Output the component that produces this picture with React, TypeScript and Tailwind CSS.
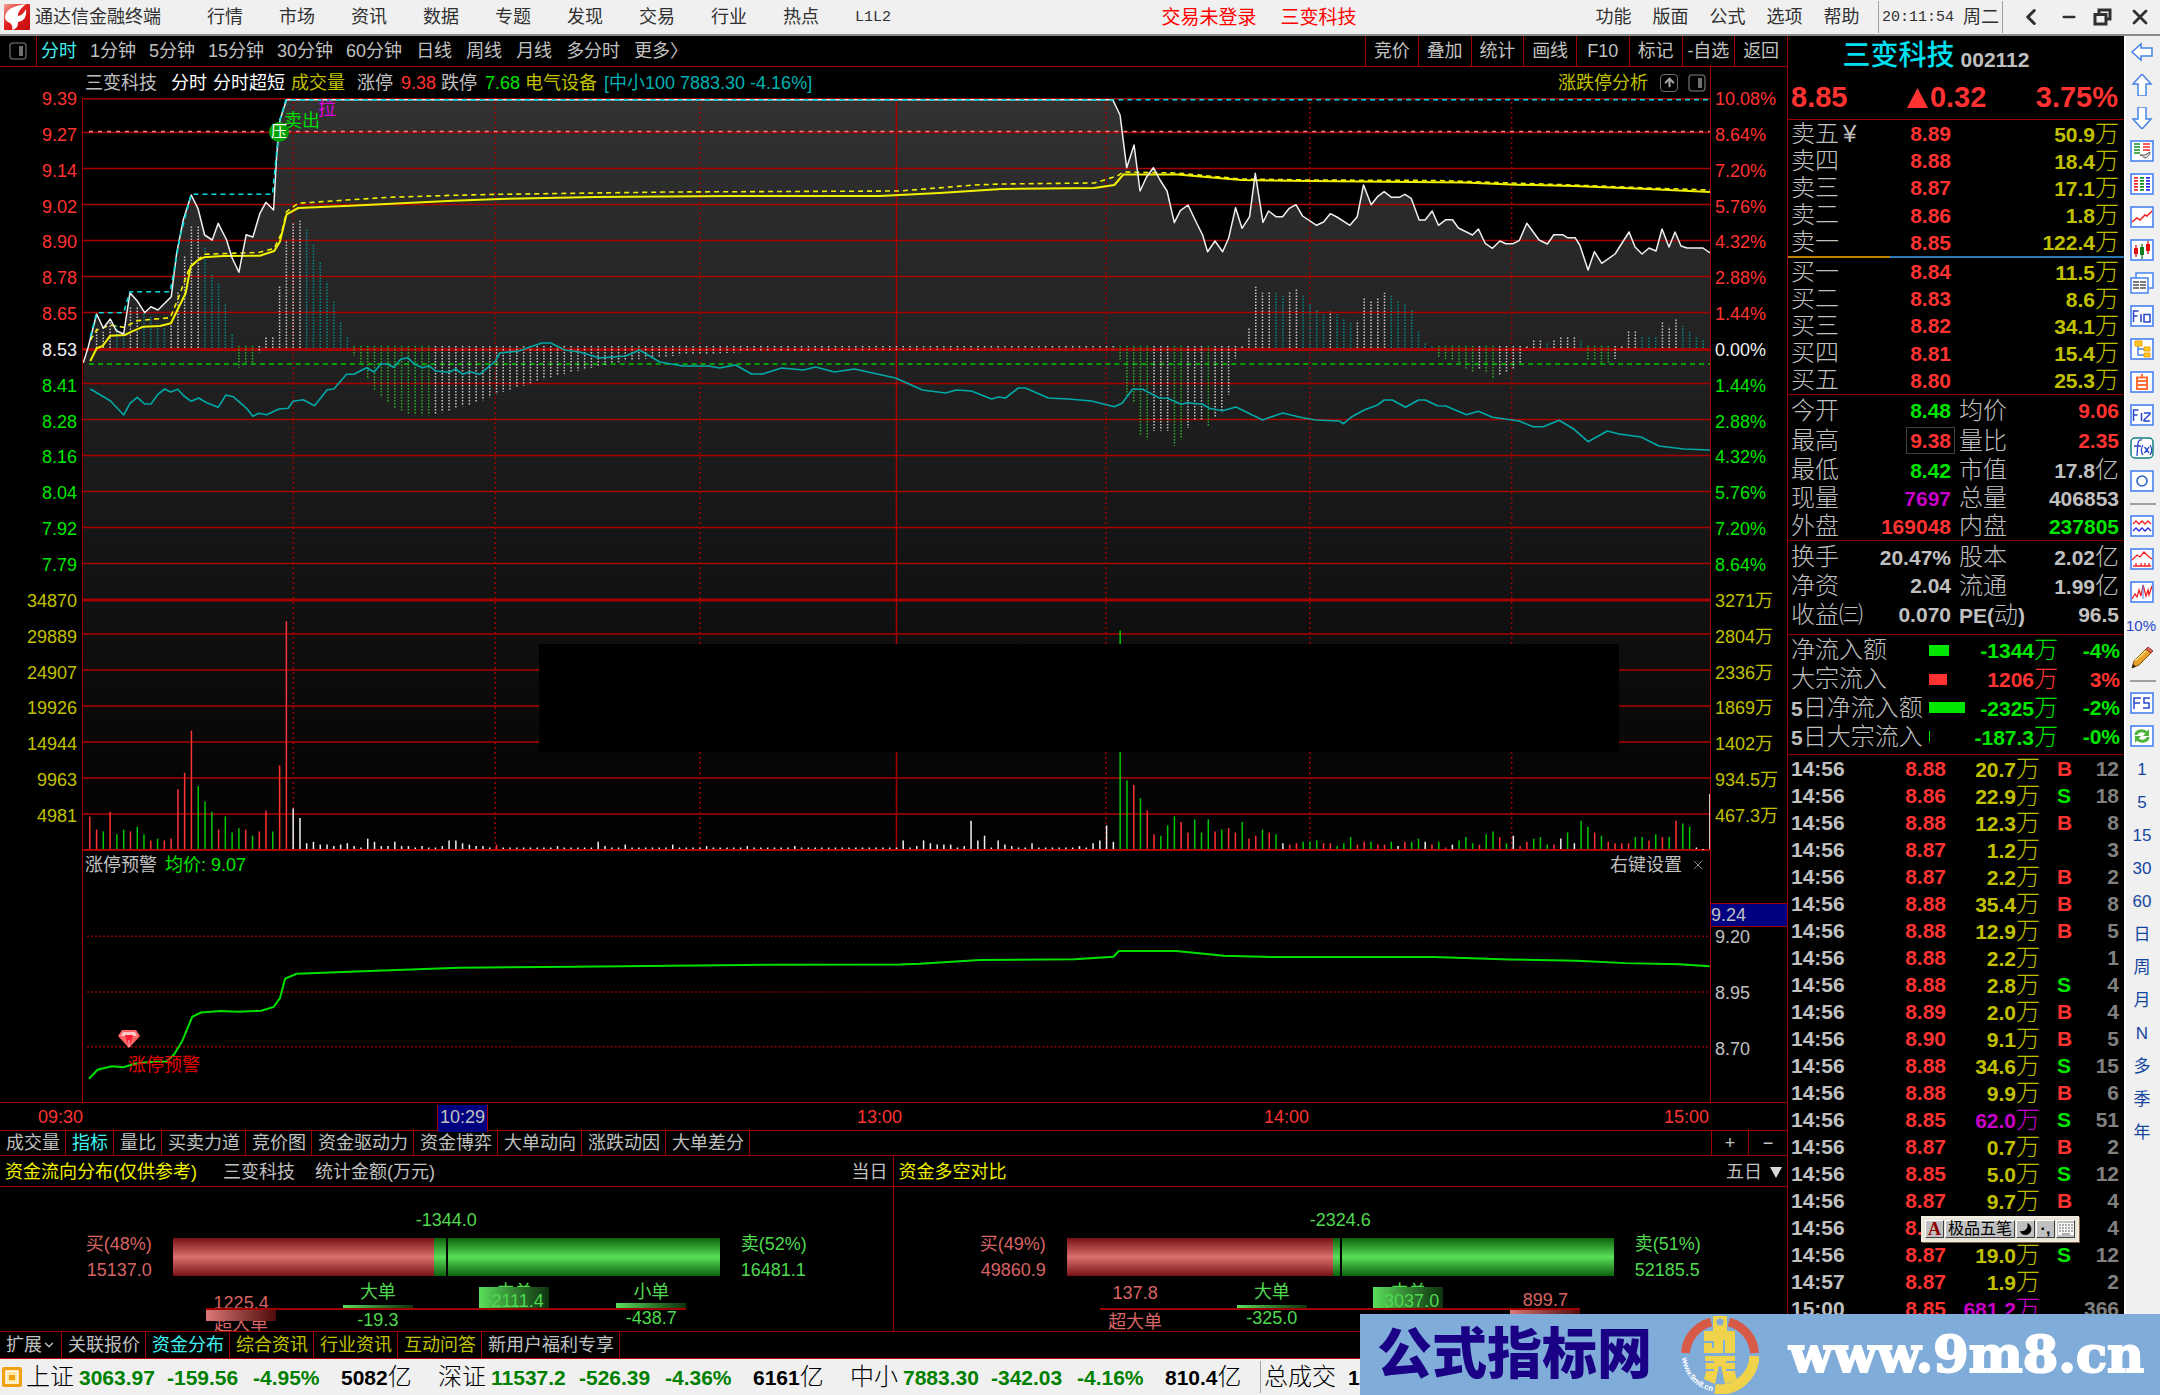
import React from "react";
import { ArrowUp, ChevronDown, ChevronLeft, Minus, X } from "lucide-react";

type Pt = [number, number];

/* ---------- chart geometry ---------- */
const STEP = 6.783;
const LEFT = 83;
const minuteX = (i: number) => LEFT + STEP * i;
const at = (ox: number, oy: number, kx: number, ky: number, list: Pt[]): Pt[] =>
  list.map(([x, y]) => [ox + x / kx, oy + y / ky]);
const path = (list: Pt[]) => list.map(([x, y]) => `${x.toFixed(1)},${y.toFixed(1)}`).join(" ");

const price: Pt[] = [
  ...at(80, 90, 3, 3, [
    [10, 818], [25, 770], [50, 672], [70, 715], [91, 687], [109, 722], [131, 732], [150, 608], [172, 633], [194, 668],
    [213, 650], [234, 660], [274, 620], [290, 490], [310, 390], [334, 315], [354, 355], [374, 435], [397, 450], [415, 400],
    [440, 450], [455, 500], [477, 547], [499, 434], [519, 441], [540, 370], [558, 337], [581, 360], [590, 200], [600, 90], [620, 29],
  ]),
  ...at(1110, 90, 3, 3, [
    [10, 29], [32, 75], [52, 233], [74, 165], [92, 303], [112, 260], [132, 233], [152, 270], [173, 303], [195, 398],
    [213, 362], [236, 345], [260, 395], [280, 435], [295, 485], [317, 453], [340, 485], [358, 445], [379, 353], [398, 415],
    [421, 380], [438, 250], [461, 397], [478, 363], [500, 380], [520, 380], [540, 355], [560, 344], [580, 378], [622, 406],
    [643, 396], [663, 371], [683, 381], [722, 406], [744, 380], [763, 285], [786, 344], [805, 320], [825, 305], [847, 322],
    [870, 322], [887, 313], [906, 325], [930, 390], [948, 390], [969, 363], [988, 406], [1010, 389], [1030, 389], [1048, 414],
    [1090, 435], [1108, 417], [1128, 460], [1150, 475], [1172, 453], [1190, 461], [1212, 461], [1231, 451], [1253, 400],
    [1290, 450], [1315, 462], [1334, 434], [1360, 434], [1375, 443], [1398, 443], [1412, 465], [1437, 540], [1456, 485], [1478, 520],
  ]),
  [1616, 254], [1630, 232], [1636, 247], [1643, 254], [1650, 248], [1657, 251], [1663, 229], [1670, 247], [1676, 232],
  [1682, 246], [1688, 248], [1704, 248], [1711, 253],
];

const high: Pt[] = [
  ...at(80, 90, 3, 3, [
    [31, 740], [50, 668], [131, 668], [150, 605], [271, 605], [300, 440], [334, 313], [578, 313], [585, 240], [600, 90], [618, 29],
  ]),
  [1711, 99.7],
];

const average: Pt[] = [
  ...at(80, 90, 3, 3, [
    [31, 813], [50, 775], [68, 768], [91, 737], [135, 735], [155, 725], [190, 710], [240, 708], [273, 700], [295, 655],
    [317, 610], [332, 530], [352, 512], [372, 502], [430, 498], [540, 497], [583, 483], [600, 455], [620, 373], [655, 354],
    [810, 347], [1120, 332], [1260, 327],
  ]),
  [596, 197], [731, 196], [880, 196], [940, 193], [1002, 189], [1095, 188], [1115, 185], [1124, 174.5], [1178, 174.5],
  [1242, 180], [1310, 181], [1465, 182.5], [1511, 184.5], [1574, 186], [1649, 189], [1711, 192],
];

const averageFast: Pt[] = [
  ...at(80, 90, 3, 3, [
    [31, 750], [50, 720], [91, 705], [131, 712], [172, 692], [271, 683], [295, 625], [330, 530], [374, 493], [540, 487],
    [583, 475], [605, 430], [620, 365], [655, 340], [800, 330], [930, 322], [1120, 316], [1260, 313],
  ]),
  [596, 193], [670, 192], [900, 191], [975, 185], [1002, 184], [1095, 183], [1118, 176], [1124, 172], [1178, 173],
  [1242, 179], [1310, 180], [1440, 180.5], [1511, 183], [1574, 185], [1649, 188], [1711, 190],
];

const indexLine: Pt[] = [
  ...at(80, 90, 3, 3, [
    [31, 897], [91, 932], [131, 975], [150, 940], [172, 922], [194, 942], [213, 942], [234, 913], [254, 897], [272, 906],
    [293, 898], [312, 918], [334, 934], [356, 924], [380, 938], [415, 952], [438, 915], [460, 920], [500, 955], [519, 979],
    [536, 970], [560, 974], [597, 957], [625, 955], [640, 934], [670, 929], [704, 947], [742, 899], [762, 897], [800, 853],
    [822, 853], [860, 833], [883, 846], [903, 822], [922, 822], [942, 832], [963, 808], [983, 803], [1005, 823], [1028, 833],
    [1048, 827], [1067, 843], [1108, 847], [1128, 837], [1149, 853], [1170, 845], [1200, 853], [1225, 832], [1247, 813],
  ]),
  [500, 353], [519, 351], [542, 343], [551, 343], [565, 350], [580, 352], [600, 358], [626, 356], [640, 350], [660, 362],
  [683, 366], [709, 366], [720, 368], [736, 365], [752, 374], [763, 374], [782, 368], [804, 370], [816, 367], [835, 372],
  [855, 369], [896, 378], [923, 390], [946, 393], [957, 390], [972, 391], [992, 399], [999, 397], [1006, 398], [1019, 388],
  [1026, 388], [1049, 398], [1069, 399], [1092, 401],
  ...at(1110, 90, 3, 3, [
    [15, 950], [38, 940], [70, 898], [100, 898], [150, 924], [175, 925], [215, 943], [235, 938], [280, 943], [300, 955],
    [340, 962], [380, 951], [460, 990], [520, 969], [580, 983], [620, 990], [690, 993], [703, 1001], [725, 982], [765, 960],
    [805, 945], [825, 930], [850, 930], [889, 952], [928, 930], [948, 930], [985, 947], [1010, 948], [1072, 974], [1108, 964],
    [1150, 982], [1230, 993], [1272, 1010], [1303, 1010], [1350, 991], [1395, 1018], [1437, 1055], [1495, 1023],
  ]),
  [1620, 434], [1642, 437], [1660, 446], [1685, 449], [1711, 450],
];

const warning: Pt[] = [
  ...at(0, 560, 1.742, 2.8, [
    [155, 1452], [170, 1427], [195, 1417], [215, 1420], [235, 1410], [260, 1405], [290, 1404], [303, 1385], [318, 1345],
    [335, 1278], [350, 1266], [385, 1262], [415, 1264], [455, 1261], [477, 1250], [488, 1225], [497, 1170], [517, 1157],
    [632, 1150], [800, 1140], [1000, 1137], [1296, 1132], [1568, 1131],
  ]),
  ...at(880, 560, 1.742, 2.8, [
    [70, 1129], [175, 1118], [340, 1116], [408, 1109], [417, 1093], [517, 1093], [600, 1106], [690, 1110], [967, 1110],
    [1098, 1117], [1215, 1120], [1300, 1127], [1394, 1130], [1447, 1136],
  ]),
];

const INK: Record<string, string> = { W: "#c8c8c8", T: "#008a8a", G: "#2fae2f", R: "#ff3232", g: "#00c800", w: "#f0f0f0" };

type Bar = { i: number; ink: string; level: number };
const parse = (start: number, text: string): Bar[] =>
  text.split(" ").map((t, k) => ({ i: start + k, ink: t[0], level: Number(t.slice(1)) }));

const momentum: Bar[] = [
  ...parse(2, "W715 W725 W695 T705 T735 W650 W650 T670 T680 T700 T710 W695 W603 W495 W405 W405 T472 T548 T580 T643 T733 G833 G820 G825 W787 W742 W742 W585 W453 W400 W392 T418 T463 T517 T575 T635 T693 T742 G797 G822 G868 G900 G922 G940 G955 G964 G972 G976 G976 G976 W972 W967 W962 W957 W949 W945 W937 W931 W922 W913"),
  ...parse(62, "W905 W899 W893 W887 W880 W874 W868 W862 W857 W852 W847 W842 W838 W834 W830 W825 W821 W817 W814 W811 W808 W806 W804 W802 W800 W798 W796 W795 W794 W793 W792 W791 W790 W789 W788 W787 W786 W786 W785 W785 W784 W784 W783 W783 W783 W782 W782 W782 W782 W781 W781 W781 W781 W781 W780 W780 W780 W780 W780 W780 W780 W780 W779 W779 W779 W779 W779 W779 W779 W779 W779"),
  ...parse(133, "W778 W778 W778 W778 W778 W778 W778 W778 W778 W778 W778 W778 W778 W778 W778 W778 W778 W778 W778 W778"),
  ...parse(153, "G812 G920 G940 G1035 G1048 W1022 W1022 W1022 G1067 G1048 W1013 W990 W990 G1010 W983 W967 W914 W806 W765 W712 W590 W608 W603 T608 T617 W603 W595 T617 T640 T660 T673 W665 T672 T685 T698 W692 W625 W630 W622 W608 T617 T630 T640 T660 T720 T760 T767 G802 G808 G812 G825 G838 G847 W838 G850 G868 W856 W847 W838 W823 W765 W747 W750 T760 W747 W740 W738 W740 T752 G812 G812 G820 G822 W807 W765 W720 W720 T738 T738 T742 W697 W710 W688 T708 T725 T740 T748"),
];

const small = (n: number, level = 805) => Array(n).fill(`w${level}`).join(" ");
const volume: Bar[] = parse(
  1,
  "R718 R755 g760 R705 g768 g755 R760 g747 g768 R785 g780 R785 R780 R642 R596 R478 g633 g676 g705 R755 g718 g763 g751 R755 g772 R760 R701 g760 R575 R171 w696 w722 w793 w789 w797 w797 w801 w797 w793 w801 w805 w780 w789 w801 w801 w789 w801 w801 w805 w801 w805 w805 w801 w785 w785 w793 w797 w801 w801 w805 R797 " +
    small(8) + " w801 " + small(5) + " w789 w801 w805 w805 w797 " + small(6) + " w797 " + small(4) + " w801 " + small(5) + " w801 " + small(6) + " w801 " + small(15) +
    " w785 w805 w801 w785 w793 w797 w797 w797 w805 w801 w730 w785 w772 w805 w785 w797 w801 w805 w805 w793 " + small(6) +
    " w801 w805 w793 w785 w743 w789 g197 g617 R630 g667 R701 R768 g772 g743 g718 R734 R763 g726 g763 g726 R760 g755 R751 R763 g734 R780 R772 g755 R763 g768 w793 R797 R793 g789 g789 g785 R793 R793 g801 g793 g776 R797 R789 g789 R797 R797 g789 w801 R789 g789 g780 w789 R797 g789 R805 w797 g785 g776 g793 R797 g768 g760 R776 g793 w772 R801 R789 g780 g776 g797 R797 w780 g763 w793 g730 g747 R763 g772 R789 R793 R793 R793 g776 g776 R785 g768 R776 g776 R730 g738 g747 w805 w812 w655",
);

const priceGrid = [132.5, 168.5, 204.5, 240.5, 276.5, 312.5, 383.5, 419.5, 455.5, 491.5, 527.5, 563.5];
const volumeGrid = [634, 670, 706, 742, 778, 814];
const dottedX = [293.5, 495.5, 700.5, 1106.5, 1310.5, 1512.5];

function PriceChart() {
  return (
    <svg className="block h-full w-full" viewBox="83 98 1628 753" preserveAspectRatio="none" aria-label="三变科技分时图">
      <defs>
        <linearGradient id="shade" x1="0" y1="98" x2="0" y2="850" gradientUnits="userSpaceOnUse">
          <stop offset="0" stopColor="#323232" />
          <stop offset="0.5" stopColor="#1a1a1a" />
          <stop offset="1" stopColor="#000" />
        </linearGradient>
      </defs>
      <polygon points={`83,850 ${path(price)} 1711,850`} fill="url(#shade)" />
      <g stroke="#a80000" strokeWidth="1.5">
        <path d="M83 98.7H1711" />
        {priceGrid.map((y) => <path key={y} d={`M83 ${y}H1711`} />)}
        <path d="M83 349.5H1711M83 600H1711" strokeWidth="3" />
        <path d="M897 98V850" />
      </g>
      <g stroke="#850000" strokeWidth="2">
        {volumeGrid.map((y) => <path key={y} d={`M83 ${y}H1711`} />)}
        <path d="M83 850H1711" stroke="#b00000" />
      </g>
      <g stroke="#a00000" strokeWidth="1.5" strokeDasharray="2 3">
        {dottedX.map((x) => <path key={x} d={`M${x} 102V850`} />)}
      </g>
      <path d="M89 131.5H1711" stroke="#ff8080" strokeWidth="1.5" strokeDasharray="4 5" />
      <path d="M89 364H1711" stroke="#00c800" strokeWidth="1.5" strokeDasharray="5 4" />
      <g strokeWidth="1.5" strokeDasharray="1.5 1.5">
        {momentum.map(({ i, ink, level }) => (
          <path key={i} d={`M${minuteX(i).toFixed(1)} ${level < 777 ? 348 : 346}V${(90 + level / 3).toFixed(1)}`} stroke={INK[ink]} />
        ))}
      </g>
      <g strokeWidth="1.5">
        {volume.map(({ i, ink, level }) => (
          <path key={i} d={`M${minuteX(i).toFixed(1)} 849V${(560 + level / 2.8).toFixed(1)}`} stroke={INK[ink]} />
        ))}
      </g>
      <g fill="none" strokeLinejoin="round">
        <polyline points={path(indexLine)} stroke="#00a8a8" strokeWidth="1.6" />
        <polyline points={path(average)} stroke="#f0f000" strokeWidth="2" />
        <polyline points={path(averageFast)} stroke="#f0f000" strokeWidth="1.6" strokeDasharray="5 4" />
        <polyline points={path(price)} stroke="#f0f0f0" strokeWidth="1.5" />
        <polyline points={path(high)} stroke="#00dcdc" strokeWidth="1.6" strokeDasharray="5 4" />
      </g>
    </svg>
  );
}

function WarningChart() {
  return (
    <svg className="block h-full w-full" viewBox="83 878 1628 224" preserveAspectRatio="none" aria-label="涨停预警">
      <g stroke="#900000" strokeWidth="1.3" strokeDasharray="2 2">
        <path d="M87 935.5H1711M87 991.5H1711M87 1046.5H1711" />
      </g>
      <polyline points={path(warning)} fill="none" stroke="#00e000" strokeWidth="2" />
    </svg>
  );
}

/* ---------- page data ---------- */
const menus = ["行情", "市场", "资讯", "数据", "专题", "发现", "交易", "行业", "热点"];
const rightMenus = ["功能", "版面", "公式", "选项", "帮助"];
const minutePeriods = ["1分钟", "5分钟", "15分钟", "30分钟", "60分钟"];
const longPeriods = ["日线", "周线", "月线", "多分时", "更多〉"];
const tools = ["竞价", "叠加", "统计", "画线", "F10", "标记", "-自选", "返回"];
const indicatorTabs = ["成交量", "指标", "量比", "买卖力道", "竞价图", "资金驱动力", "资金博弈", "大单动向", "涨跌动因", "大单差分"];
const leftAxis = ["9.39", "9.27", "9.14", "9.02", "8.90", "8.78", "8.65", "8.53", "8.41", "8.28", "8.16", "8.04", "7.92", "7.79", "34870", "29889", "24907", "19926", "14944", "9963", "4981"];
const rightAxis = ["10.08%", "8.64%", "7.20%", "5.76%", "4.32%", "2.88%", "1.44%", "0.00%", "1.44%", "2.88%", "4.32%", "5.76%", "7.20%", "8.64%", "3271万", "2804万", "2336万", "1869万", "1402万", "934.5万", "467.3万"];
const axisInk = (i: number) =>
  i < 7 ? "text-[#ff3232]" : i === 7 ? "text-[#f0f0f0]" : i < 14 ? "text-[#00e600]" : "text-[#c0c000]";

const asks = [["卖五", "8.89", "50.9"], ["卖四", "8.88", "18.4"], ["卖三", "8.87", "17.1"], ["卖二", "8.86", "1.8"], ["卖一", "8.85", "122.4"]];
const bids = [["买一", "8.84", "11.5"], ["买二", "8.83", "8.6"], ["买三", "8.82", "34.1"], ["买四", "8.81", "15.4"], ["买五", "8.80", "25.3"]];

const red = "text-[#ff3232]";
const green = "text-[#00e600]";
const gray = "text-[#c0c0c0]";
const purple = "text-[#c800c8]";
const olive = "text-[#c0c000]";

const stats = [
  ["今开", "8.48", green, "均价", "9.06", red],
  ["最高", "9.38", red, "量比", "2.35", red],
  ["最低", "8.42", green, "市值", "17.8亿", gray],
  ["现量", "7697", purple, "总量", "406853", gray],
  ["外盘", "169048", red, "内盘", "237805", green],
];
const shares = [
  ["换手", "20.47%", gray, "股本", "2.02亿", gray],
  ["净资", "2.04", gray, "流通", "1.99亿", gray],
  ["收益㈢", "0.070", gray, "PE(动)", "96.5", gray],
];
const flows = [
  { name: "净流入额", bar: "w-5 bg-[#00e600]", value: "-1344万", pct: "-4%", ink: green },
  { name: "大宗流入", bar: "w-[18px] bg-[#ff3232]", value: "1206万", pct: "3%", ink: red },
  { name: "5日净流入额", bar: "w-9 bg-[#00e600]", value: "-2325万", pct: "-2%", ink: green },
  { name: "5日大宗流入", bar: "w-px bg-[#00e600]", value: "-187.3万", pct: "-0%", ink: green },
];
const ticks = [
  "14:56 8.88 20.7 B 12", "14:56 8.86 22.9 S 18", "14:56 8.88 12.3 B 8", "14:56 8.87 1.2 - 3", "14:56 8.87 2.2 B 2",
  "14:56 8.88 35.4 B 8", "14:56 8.88 12.9 B 5", "14:56 8.88 2.2 - 1", "14:56 8.88 2.8 S 4", "14:56 8.89 2.0 B 4",
  "14:56 8.90 9.1 B 5", "14:56 8.88 34.6 S 15", "14:56 8.88 9.9 B 6", "14:56 8.85 62.0 S 51", "14:56 8.87 0.7 B 2",
  "14:56 8.85 5.0 S 12", "14:56 8.87 9.7 B 4", "14:56 8. - - 4", "14:56 8.87 19.0 S 12", "14:57 8.87 1.9 - 2",
  "15:00 8.85 681.2 - 366",
].map((t) => t.split(" "));

/* Figures are heavy, Chinese characters light and larger. */
function Mixed({ text }: { text: string }) {
  return (
    <>
      {text.split(/([\u3200-\u9fff]+)/).filter(Boolean).map((part, i) =>
        /[\u3200-\u9fff]/.test(part) ? (
          <span key={i} className="text-2xl leading-none font-light">{part}</span>
        ) : (
          <span key={i} className="text-[21px] leading-none font-bold">{part}</span>
        ),
      )}
    </>
  );
}

/* ---------- header ---------- */
function Header() {
  return (
    <header className="flex h-9 items-center border-b-2 border-[#8a8a8a] bg-[#f0f0f0] text-lg leading-none text-[#303030]">
      <svg className="ml-1 h-[26px] w-[26px]" viewBox="0 0 26 26">
        <defs>
          <linearGradient id="brand" x1="0" y1="0" x2="1" y2="1">
            <stop offset="0" stopColor="#f4a090" />
            <stop offset="0.45" stopColor="#e02020" />
            <stop offset="1" stopColor="#c80808" />
          </linearGradient>
        </defs>
        <rect width="26" height="26" rx="1" fill="url(#brand)" />
        <path d="M1 13C2 5 9 2 22 0c-6 5-8 8-8 12 3 0 6-3 8-7 1 8-2 12-8 13 0 5-2 7-6 8 1-3 0-5-2-7-3-1-5-3-5-6Z" fill="#fff" />
      </svg>
      <h1 className="ml-[5px] w-[126px] whitespace-nowrap">通达信金融终端</h1>
      <nav className="ml-7 flex">
        {menus.map((m) => (
          <button key={m} className="w-[72px] text-center">{m}</button>
        ))}
        <button className="w-[72px] text-center font-['Liberation_Mono',monospace] text-[15px]">L1L2</button>
      </nav>
      <div className="flex flex-1 justify-center gap-6 pl-6 text-[19px] whitespace-nowrap text-[#ff0000]">
        <button>交易未登录</button>
        <button>三变科技</button>
      </div>
      <nav className="flex">
        {rightMenus.map((m) => (
          <button key={m} className="w-[57px] text-center">{m}</button>
        ))}
      </nav>
      <div className="ml-2 flex h-8 w-[125px] items-center justify-between border-x border-[#a0a0a0] px-[3px]">
        <time className="font-['Liberation_Mono',monospace] text-[15px]">20:11:54</time>
        <span>周二</span>
      </div>
      <div className="flex w-[157px] items-center justify-between pr-2 pl-[15px]">
        <button aria-label="后退"><ChevronLeft size={26} strokeWidth={2.8} /></button>
        <button aria-label="最小化"><Minus size={18} strokeWidth={3.4} /></button>
        <button aria-label="还原">
          <svg className="h-[18px] w-[19px]" viewBox="0 0 19 18">
            <path d="M6 6V2h11v9h-4M2 6.500h11V16H2Z" fill="none" stroke="#303030" strokeWidth="3" />
          </svg>
        </button>
        <button aria-label="关闭"><X size={24} strokeWidth={2.8} /></button>
      </div>
    </header>
  );
}

function PanelIcon() {
  return (
    <svg className="h-[18px] w-[18px]" viewBox="0 0 18 18">
      <rect x="1" y="1" width="16" height="16" rx="3" fill="none" stroke="#585858" strokeWidth="1.6" />
      <rect x="10" y="4" width="4" height="10" fill="#707070" />
    </svg>
  );
}

function Toolbar() {
  return (
    <div className="flex h-[31px] items-center border-b border-[#a00000] text-lg leading-none text-[#c0c0c0]">
      <button aria-label="侧栏" className="flex h-full w-[37px] items-center justify-center border-r border-[#a00000]">
        <PanelIcon />
      </button>
      <nav className="ml-1 flex gap-[13px] whitespace-nowrap">
        <button className="text-[#40f0f0]">分时</button>
        {minutePeriods.map((p) => <button key={p}>{p}</button>)}
        {longPeriods.map((p) => <button key={p} className="pl-px">{p}</button>)}
      </nav>
      <nav className="ml-auto grid h-full w-[422px] grid-cols-8">
        {tools.map((t) => (
          <button key={t} className="border-l border-[#a00000] text-center whitespace-nowrap">{t}</button>
        ))}
      </nav>
    </div>
  );
}

function ChartCaption() {
  return (
    <div className="mr-[76px] flex h-[31px] items-center border-r border-[#a00000] pr-1 pl-[85px] text-lg leading-none whitespace-nowrap text-[#c0c0c0]">
      <span className="w-[86px]">三变科技</span>
      <span className="w-[42px] text-white">分时</span>
      <span className="w-[78px] text-white">分时超短</span>
      <span className="w-[66px] text-[#c0c000]">成交量</span>
      <span className="w-11">涨停</span>
      <span className="w-10 text-[#ff3232]">9.38</span>
      <span className="w-11">跌停</span>
      <span className="w-10 text-[#00e600]">7.68</span>
      <span className="w-[79px] text-[#c0c000]">电气设备</span>
      <span className="text-[#00b0b0]">[中小100 7883.30 -4.16%]</span>
      <button className="ml-auto text-[#c0c000]">涨跌停分析</button>
      <button aria-label="上移" className="mr-2.5 ml-3 flex h-[18px] w-[18px] items-center justify-center rounded border border-[#707070] text-[#a0a0a0]">
        <ArrowUp size={13} strokeWidth={4} />
      </button>
      <button aria-label="侧栏"><PanelIcon /></button>
    </div>
  );
}

function Charts() {
  return (
    <section className="text-lg whitespace-nowrap">
      <ChartCaption />
      <div className="flex h-[753px]">
        <ul className="-mt-[9px] flex h-[737px] w-[82px] flex-col justify-between pr-[5px] text-right">
          {leftAxis.map((v, i) => <li key={i} className={`h-5 leading-5 ${axisInk(i)}`}>{v}</li>)}
        </ul>
        <div className="relative min-w-0 flex-1 border-x border-[#a00000]">
          <PriceChart />
          <div className="absolute top-[546px] left-[28%] h-[108px] w-[66.4%] bg-black" />
          <span className="absolute top-0.5 left-[235px] leading-none text-[#e000e0]">拉</span>
          <span className="absolute top-3.5 left-[201px] leading-none text-[#00dc00]">卖出</span>
          <span className="absolute top-6 left-[186px] flex h-5 w-5 items-center justify-center rounded-full bg-[#00a000] text-base leading-none text-white">
            压
          </span>
        </div>
        <ul className="-mt-[9px] flex h-[737px] w-[76px] flex-col justify-between pl-1">
          {rightAxis.map((v, i) => <li key={i} className={`h-5 leading-5 ${axisInk(i)}`}>{v}</li>)}
        </ul>
      </div>
      <div className="flex h-[252px] border-b border-[#a00000]">
        <div className="ml-[82px] flex min-w-0 flex-1 flex-col border-x border-[#a00000]">
          <div className="flex h-7 items-center pr-1 pl-0.5 leading-none text-[#c0c0c0]">
            <span>涨停预警</span>
            <span className="ml-2 text-[#00e600]">均价: 9.07</span>
            <button className="ml-auto">右键设置</button>
            <button aria-label="关闭指标" className="ml-2 text-[#909090]"><X size={16} strokeWidth={1.4} /></button>
          </div>
          <div className="relative min-h-0 flex-1">
            <WarningChart />
            <svg className="absolute top-[150px] left-[34px] h-[19px] w-6" viewBox="0 0 24 19">
              <path d="M5 1h14l4 6-11 12L1 7Z" fill="#ff6464" />
              <path d="M6 3h12l2 4H4Z" fill="#ffc8c8" />
              <path d="M8 6h8l-1 4-3 8-3-8Z" fill="#ff1e32" />
              <path d="M12 11v7" stroke="#fff" strokeWidth="0.8" />
            </svg>
            <span className="absolute top-[177px] left-[45px] leading-none text-[#e60000]">涨停预警</span>
          </div>
        </div>
        <div className="w-[76px] pt-[52px] text-[#c0c0c0]">
          <p className="h-6 border-y border-[#a00000] bg-[#000080] leading-[22px]">9.24</p>
          <p className="mb-9 pl-1 leading-5">9.20</p>
          <p className="mb-9 pl-1 leading-5">8.95</p>
          <p className="pl-1 leading-5">8.70</p>
        </div>
      </div>
      <div className="flex h-7 border-b border-[#a00000] pr-[76px] leading-7 text-[#ff3232]">
        <span className="w-[83px] text-right">09:30</span>
        <div className="grid flex-1 grid-cols-[407fr_412fr_407fr_402fr] text-right">
          <span><span className="mr-0.5 inline-block h-[27px] border-x border-[#a00000] bg-[#000080] px-0.5 leading-6 text-[#c0c0c0]">10:29</span></span>
          <span>13:00</span>
          <span>14:00</span>
          <span className="pr-0.5">15:00</span>
        </div>
      </div>
    </section>
  );
}

function TabButton({ label, ink, open }: { label: string; ink: string; open?: boolean }) {
  return (
    <button className={`flex items-center border-r border-[#a00000] pr-[5px] pl-1.5 whitespace-nowrap ${ink}`}>
      {label}
      {open && <ChevronDown size={14} strokeWidth={2.4} />}
    </button>
  );
}

function IndicatorTabs() {
  return (
    <nav className="flex h-[25px] border-b border-[#a00000] text-lg leading-none text-[#c0c0c0]">
      {indicatorTabs.map((t, i) => <TabButton key={t} label={t} ink={i === 1 ? "text-[#40f0f0]" : ""} />)}
      <button aria-label="放大" className="ml-auto w-[38px] border-x border-[#a00000]">+</button>
      <button aria-label="缩小" className="w-[38px]">−</button>
    </nav>
  );
}

/* ---------- money flow ---------- */
type Order = { box: string; name: string; namePos: string; value: string; valuePos: string; ink: string };
const buyInk = "text-[#d86464]";
const sellInk = "text-[#50d850]";

function FlowPanel(props: {
  head: React.ReactNode; net: string; buy: string; buyAmt: string; sell: string; sellAmt: string;
  redWidth: string; orders: Order[]; edge: string;
}) {
  return (
    <section className={`min-w-0 text-lg leading-none whitespace-nowrap ${props.edge}`}>
      <header className="flex h-[31px] items-center border-b border-[#a00000] px-[5px] pt-0.5 text-[#c0c0c0]">{props.head}</header>
      <div className="h-[145px] overflow-hidden border-b border-[#a00000] pt-6">
        <p className={`text-center ${sellInk}`}>{props.net}</p>
        <div className="mt-1.5 flex h-[44px] items-center justify-center gap-[21px]">
          <p className={`w-[70px] text-right leading-[26px] ${buyInk}`}>{props.buy}<br />{props.buyAmt}</p>
          <div className="flex h-[38px] w-[547px]">
            <div className={`bg-linear-to-b from-[#780f14] via-[#dc6e6e] to-[#780f14] ${props.redWidth}`} />
            <div className="relative flex-1 bg-linear-to-b from-[#0a640a] via-[#5ae05a] to-[#0a640a]" />
            <div className="h-full w-0.5 bg-black" />
            <div className="w-[272px] bg-linear-to-b from-[#0a640a] via-[#5ae05a] to-[#0a640a]" />
          </div>
          <p className={`w-[70px] leading-[26px] ${sellInk}`}>{props.sell}<br />{props.sellAmt}</p>
        </div>
        <div className="relative mx-auto grid h-[60px] w-[547px] grid-cols-4 text-center">
          <div className="absolute top-[29px] right-[34px] left-[33px] z-10 h-0.5 bg-[#a00000]" />
          {props.orders.map((o) => (
            <div key={o.name} className={`relative ${o.ink}`}>
              <span className={`absolute inset-x-0 ${o.namePos}`}>{o.name}</span>
              <i className={`absolute left-[33px] w-[70px] bg-linear-to-r ${o.box}`} />
              <span className={`absolute inset-x-0 ${o.valuePos}`}>{o.value}</span>
            </div>
          ))}
        </div>
      </div>
    </section>
  );
}

const greenBox = "from-[#5ae05a] to-[#0f320f]";
const redBox = "from-[#dc7878] to-[#500a0a]";
const dayOrders: Order[] = [
  { name: "超大单", namePos: "top-9", value: "1225.4", valuePos: "top-[15px]", box: `top-[30px] h-3 ${redBox}`, ink: buyInk },
  { name: "大单", namePos: "top-1", value: "-19.3", valuePos: "top-8", box: `top-[26px] h-[3px] ${greenBox}`, ink: sellInk },
  { name: "中单", namePos: "top-1", value: "-2111.4", valuePos: "top-[13px]", box: `top-2 h-[21px] ${greenBox}`, ink: sellInk },
  { name: "小单", namePos: "top-1", value: "-438.7", valuePos: "top-[30px]", box: `top-6 h-[5px] ${greenBox}`, ink: sellInk },
];
const weekOrders: Order[] = [
  { name: "超大单", namePos: "top-[34px]", value: "137.8", valuePos: "top-[5px]", box: `top-[29px] h-px ${redBox}`, ink: buyInk },
  { name: "大单", namePos: "top-1", value: "-325.0", valuePos: "top-[30px]", box: `top-[26px] h-[3px] ${greenBox}`, ink: sellInk },
  { name: "中单", namePos: "top-1", value: "-3037.0", valuePos: "top-[13px]", box: `top-2 h-[21px] ${greenBox}`, ink: sellInk },
  { name: "小单", namePos: "top-9", value: "899.7", valuePos: "top-[12px]", box: `top-[30px] h-3 ${redBox}`, ink: buyInk },
];

function MoneyFlow() {
  return (
    <div className="grid grid-cols-2">
      <FlowPanel
        edge="border-r border-[#a00000]"
        head={<>
          <h2 className="w-[218px] text-[#f0f000]">资金流向分布(仅供参考)</h2>
          <span className="w-[92px]">三变科技</span>
          <span>统计金额(万元)</span>
          <button className="ml-auto">当日</button>
        </>}
        net="-1344.0" buy="买(48%)" buyAmt="15137.0" sell="卖(52%)" sellAmt="16481.1" redWidth="w-[261px]" orders={dayOrders}
      />
      <FlowPanel
        edge=""
        head={<>
          <h2 className="text-[#f0f000]">资金多空对比</h2>
          <button className="ml-auto flex items-center gap-2">五日
            <svg className="h-3 w-3" viewBox="0 0 12 12"><path d="M0 1h12L6 12Z" fill="#d8d8d8" /></svg>
          </button>
        </>}
        net="-2324.6" buy="买(49%)" buyAmt="49860.9" sell="卖(51%)" sellAmt="52185.5" redWidth="w-[266px]" orders={weekOrders}
      />
    </div>
  );
}

function InfoTabs() {
  const plain = "text-[#c0c0c0]";
  const gold = "text-[#c0c000]";
  return (
    <nav className="flex h-[27px] border-b border-[#c00000] text-lg leading-none">
      <TabButton label="扩展" ink={plain} open />
      <TabButton label="关联报价" ink={plain} />
      <TabButton label="资金分布" ink="text-[#40f0f0]" />
      <TabButton label="综合资讯" ink={gold} />
      <TabButton label="行业资讯" ink={gold} />
      <TabButton label="互动问答" ink={gold} />
      <TabButton label="新用户福利专享" ink={plain} />
    </nav>
  );
}

/* ---------- quote panel ---------- */
function Depth({ rows, yen }: { rows: string[][]; yen?: boolean }) {
  return (
    <table className="h-[136px] w-full table-fixed border-collapse leading-none">
      <tbody>
        {rows.map(([name, p, v], i) => (
          <tr key={name}>
            <th scope="row" className="w-[88px] p-0 pl-[3px] text-left text-2xl leading-none font-light text-[#c0c0c0]">
              {name}{yen && i === 0 && <span className="ml-1">¥</span>}
            </th>
            <td className={`w-[75px] p-0 text-right ${red}`}><Mixed text={p} /></td>
            <td className={`p-0 pr-[5px] text-right ${olive}`}><Mixed text={`${v}万`} /></td>
          </tr>
        ))}
      </tbody>
    </table>
  );
}

function StatTable({ rows, size }: { rows: string[][]; size: string }) {
  return (
    <table className={`w-full table-fixed border-collapse leading-none whitespace-nowrap ${size}`}>
      <tbody>
        {rows.map(([a, av, ai, b, bv, bi]) => (
          <tr key={a}>
            <th scope="row" className="w-[74px] p-0 pl-[3px] text-left font-light text-[#c0c0c0]"><Mixed text={a} /></th>
            <td className={`w-[93px] p-0 text-right ${ai}`}>
              <span className={a === "最高" ? "inline-block border border-[#404040] px-[3px] py-0.5" : "pr-1"}><Mixed text={av} /></span>
            </td>
            <th scope="row" className="w-[70px] p-0 pl-1 text-left font-light text-[#c0c0c0]"><Mixed text={b} /></th>
            <td className={`p-0 pr-[5px] text-right ${bi}`}><Mixed text={bv} /></td>
          </tr>
        ))}
      </tbody>
    </table>
  );
}

function Ime() {
  const key = "flex items-center justify-center border border-t-white border-l-white border-r-[#404040] border-b-[#404040] bg-[#c0c0c0]";
  return (
    <div className="absolute top-[1180px] left-[133px] flex h-[26px] w-[158px] gap-px border-2 border-[#f0ece0] bg-[#e8e4d8] p-0.5 text-black shadow-[1px_1px_0_#806040]">
      <button className={`${key} w-[19px] font-['Liberation_Serif',serif] text-lg leading-none font-bold text-[#900000]`}>A</button>
      <button className={`${key} flex-1 text-base leading-none whitespace-nowrap`}>极品五笔</button>
      <button aria-label="半角" className={`${key} w-[19px]`}>
        <svg className="h-3 w-3" viewBox="0 0 12 12"><path d="M7 0c6 2 6 11-1 12-3 0-5-1-6-4 5 1 9-3 7-8Z" /></svg>
      </button>
      <button className={`${key} w-[19px] text-base leading-none font-bold`}>·,</button>
      <button aria-label="软键盘" className={`${key} w-[19px]`}>
        <svg className="h-3 w-4 shrink-0" viewBox="0 0 16 12">
          <rect width="16" height="12" fill="#f8f8f8" />
          <path d="M1 2h14M1 5h14M1 8h14" stroke="#606060" strokeDasharray="2 1" />
          <path d="M4 11h8" stroke="#606060" />
        </svg>
      </button>
    </div>
  );
}

function Quote() {
  return (
    <aside className="relative w-[337px] shrink-0 border-l border-[#a00000]">
      <div className="flex h-10 items-center justify-center gap-1.5 pr-10">
        <h2 className="text-[28px] leading-none font-medium text-[#00e0f0]">三变科技</h2>
        <span className="pt-1.5 text-[21px] leading-none font-bold text-[#c0c0c0]">002112</span>
      </div>
      <div className={`flex h-11 items-center justify-between border-b border-[#a00000] pr-1.5 pl-[3px] text-[29px] leading-none font-bold ${red}`}>
        <span>8.85</span>
        <span className="flex items-center gap-0.5 pl-2.5">
          <svg className="h-5 w-[21px]" viewBox="0 0 21 20"><path d="M10.500 0L21 20H0Z" fill="#ff3232" /></svg>
          0.32
        </span>
        <span>3.75%</span>
      </div>
      <Depth rows={asks} yen />
      <div className="flex h-0.5"><div className="w-[102px] bg-[#c08000]" /><div className="flex-1 bg-[#2878b4]" /></div>
      <Depth rows={bids} />
      <div className="border-y border-[#900000] pt-0.5"><StatTable rows={stats} size="h-[143px]" /></div>
      <div className="border-b border-[#900000] pt-0.5 pb-[5px]"><StatTable rows={shares} size="h-[86px]" /></div>
      <div className="border-b border-[#900000] pt-px pb-[3px]">
        <table className="h-[115px] w-full table-fixed border-collapse leading-none whitespace-nowrap">
          <tbody>
            {flows.map((f) => (
              <tr key={f.name}>
                <th scope="row" className="w-[141px] p-0 pl-[3px] text-left text-[#c0c0c0]"><Mixed text={f.name} /></th>
                <td className="w-[37px] p-0"><div className={`h-[11px] ${f.bar}`} /></td>
                <td className={`w-[92px] p-0 text-right ${f.ink}`}><Mixed text={f.value} /></td>
                <td className={`p-0 pr-1 text-right ${f.ink}`}><Mixed text={f.pct} /></td>
              </tr>
            ))}
          </tbody>
        </table>
      </div>
      <table className="w-full table-fixed border-collapse leading-none whitespace-nowrap">
        <tbody>
          {ticks.map(([t, p, v, side, n], i) => (
            <tr key={i} className="h-[27px]">
              <td className="w-[80px] p-0 pl-[3px] text-[#c0c0c0]"><Mixed text={t} /></td>
              <td className={v === "-" ? `w-[78px] p-0 pl-[37px] ${red}` : `w-[78px] p-0 text-right ${red}`}><Mixed text={p} /></td>
              <td className={`w-[94px] p-0 text-right ${Number(v) > 50 ? purple : olive}`}>{v !== "-" && <Mixed text={`${v}万`} />}</td>
              <td className={`w-[36px] p-0 pl-[17px] ${side === "B" ? red : green}`}>{side !== "-" && <Mixed text={side} />}</td>
              <td className="p-0 pr-[5px] text-right text-[#808080]"><Mixed text={n} /></td>
            </tr>
          ))}
        </tbody>
      </table>
      <Ime />
    </aside>
  );
}

/* ---------- side rail ---------- */
const frame = <rect x="1" y="1" width="22" height="20" fill="#fff" stroke="#4682f0" strokeWidth="1.6" />;
const railIcons: [string, React.ReactNode][] = [
  ["返回", <path d="M2 11L11 3V7H22V15H11V19Z" fill="#fff" stroke="#4682e6" strokeWidth="1.5" />],
  ["向上", <path d="M12 0L21 10H16V22H8V10H3Z" fill="#fff" stroke="#4682e6" strokeWidth="1.5" />],
  ["向下", <path d="M12 22L21 12H16V0H8V12H3Z" fill="#fff" stroke="#4682e6" strokeWidth="1.5" />],
  ["报价", <>{frame}<path d="M4 4h6M4 7h6M4 10h6M4 13h6" stroke="#109020" strokeWidth="1.6" /><path d="M13 4h7M13 7h7M13 10h7" stroke="#f02828" strokeWidth="1.6" /><path d="M10 15c3 0 3 3 5 3s5-3 5-6l-5 3z" fill="#ddd" stroke="#555" /></>],
  ["列表", <>{frame}<g strokeWidth="4" strokeDasharray="1.7 1.3"><path d="M6 4v15" stroke="#f02828" /><path d="M12 4v15" stroke="#109020" /><path d="M18 4v15" stroke="#2828e0" /></g></>],
  ["走势", <>{frame}<path d="M2 16l5-4 3 2 5-5 2 1 5-5" fill="none" stroke="#f02020" strokeWidth="1.5" /></>],
  ["K线", <>{frame}<path d="M6 6v12M18 2v13" stroke="#e01010" strokeWidth="1.3" /><path d="M12 5v15" stroke="#108020" strokeWidth="1.3" /><path d="M4 9h4v6H4zM16 5h4v7h-4z" fill="#e01010" /><path d="M10 8h4v8h-4z" fill="#108020" /></>],
  ["资料", <><path d="M6 1h17v15H6z" fill="#fff" stroke="#4682f0" strokeWidth="1.5" /><path d="M1 6h17v15H1z" fill="#fff" stroke="#4682f0" strokeWidth="1.5" /><path d="M3 10h6M3 13h6M3 16h6M10 10h6M10 13h6M10 16h6" stroke="#505050" strokeWidth="1.3" /></>],
  ["F10", <>{frame}<path d="M3.500 17V6h5M3.500 11h4M11 9v8M14 9.500h6V17h-6z" fill="none" stroke="#2846c8" strokeWidth="1.5" /></>],
  ["结构", <>{frame}<path d="M8 8v9h6M8 11h6" fill="none" stroke="#4682e6" strokeWidth="1.4" /><path d="M5 3h7v5H5zM14 9h6v4h-6zM14 15h6v4h-6z" fill="#ffc828" stroke="#f0a000" /></>],
  ["自选", <>{frame}<path d="M7 6.500h10V18H7zM7 10h10M7 14h10M12 3v3" fill="none" stroke="#ff6e32" strokeWidth="2" /></>],
  ["F12", <>{frame}<path d="M3.500 17V6h5M3.500 11h4M11.500 9v8M14 9h6v1l-6 6v1h6" fill="none" stroke="#2846c8" strokeWidth="1.5" /></>],
  ["公式", <><rect x="1" y="1" width="22" height="20" rx="4" fill="#fff" stroke="#108080" strokeWidth="1.5" /><path d="M12 3c-5-1-4 4-5 16M4 9h7M13 8c-2 3-2 7 0 10M20 8c2 3 2 7 0 10M14.500 10l4.500 6M19 10l-4.500 6" fill="none" stroke="#2846c8" strokeWidth="1.3" /></>],
  ["环形", <>{frame}<circle cx="12" cy="11" r="5" fill="none" stroke="#2864c8" strokeWidth="1.6" /></>],
];
const railCharts: [string, React.ReactNode][] = [
  ["双线", <>{frame}<path d="M3 9l3-3 3 3 3-3 3 3 3-3 3 3" fill="none" stroke="#f02020" strokeWidth="1.3" /><path d="M3 16l3-3 3 3 3-3 3 3 3-3 3 3" fill="none" stroke="#2828e0" strokeWidth="1.3" /></>],
  ["副图", <>{frame}<path d="M2 12l5-5 3 2 4-5 4 4 4 3M3 18h18M6 18v-3M11 18v-3M15 18v-3M19 18v-3" fill="none" stroke="#f02020" strokeWidth="1.3" /></>],
  ["波动", <>{frame}<path d="M2 18l3-5 2 3 2-7 2 6 2-11 3 11 2-6 1 5 3-9" fill="none" stroke="#f02020" strokeWidth="1.3" /><path d="M13 4v14" stroke="#4682f0" /></>],
];
const railPeriods = ["1", "5", "15", "30", "60", "日", "周", "月", "N", "多", "季", "年"];

function RailIcon({ label, children }: { label: string; children: React.ReactNode }) {
  return (
    <button aria-label={label} className="flex h-[33px] w-full items-center pb-0.5 pl-1">
      <svg className="h-[22px] w-6" viewBox="0 0 24 22">{children}</svg>
    </button>
  );
}

function Rail() {
  return (
    <nav className="w-9 shrink-0 border-l-2 border-white bg-[#f0f0f0] text-[#1446a0]">
      {railIcons.map(([label, art]) => <RailIcon key={label} label={label}>{art}</RailIcon>)}
      <hr className="mx-1 my-[5px] border-t-2 border-[#a0a0a0]" />
      {railCharts.map(([label, art]) => <RailIcon key={label} label={label}>{art}</RailIcon>)}
      <button className="h-[33px] w-full pr-1 text-center text-[15px] leading-none text-[#2846c8]">10%</button>
      <RailIcon label="画笔">
        <path d="M2 21l2-7L16 2l5 4L9 18Z" fill="#e8a028" stroke="#805010" />
        <path d="M16 2l2-2 5 4-2 2Z" fill="#e06050" stroke="#904030" />
        <path d="M5 14L16 4" stroke="#ffe080" strokeWidth="1.5" />
        <path d="M2 21l1-4 3 2.500Z" fill="#202020" />
      </RailIcon>
      <hr className="mx-1 my-[5px] border-t-2 border-[#a0a0a0]" />
      <RailIcon label="F5">{frame}<path d="M4 17V6h7M4 11h6M20 6h-6v5h5v5h-6" fill="none" stroke="#2846c8" strokeWidth="1.5" /></RailIcon>
      <RailIcon label="刷新">
        {frame}
        <path d="M6 10c0-4 7-6 11-2M18 12c0 4-7 6-11 2" fill="none" stroke="#50b43c" strokeWidth="3" />
        <path d="M19 4v7h-6zM5 18v-7h6z" fill="#50b43c" />
      </RailIcon>
      {railPeriods.map((p) => (
        <button key={p} className="block h-[33px] w-full pr-0.5 text-center text-[17px] leading-none">{p}</button>
      ))}
    </nav>
  );
}

/* ---------- footer ---------- */
const indices = [
  ["上证", "3063.97", "-159.56", "-4.95%", "5082亿"],
  ["深证", "11537.2", "-526.39", "-4.36%", "6161亿"],
  ["中小", "7883.30", "-342.03", "-4.16%", "810.4亿"],
];

function StatusBar() {
  return (
    <footer className="flex h-9 items-center bg-[#f0f0f0] leading-none whitespace-nowrap text-black">
      <svg className="mx-0.5 h-5 w-5" viewBox="0 0 20 20">
        <rect width="20" height="20" rx="2" fill="#f0a010" />
        <rect x="4" y="4" width="12" height="12" fill="#ffe6a0" stroke="#fff" strokeWidth="1.5" />
        <rect x="7" y="8" width="6" height="5" fill="#f0a010" />
      </svg>
      {indices.map(([name, v, d, p, amt]) => (
        <div key={name} className="flex w-[412px] items-center text-[#008000]">
          <span className="w-[55px] pl-0.5 text-black"><Mixed text={name} /></span>
          <span className="w-[88px]"><Mixed text={v} /></span>
          <span className="w-[86px]"><Mixed text={d} /></span>
          <span className="w-[88px]"><Mixed text={p} /></span>
          <span className="text-black"><Mixed text={amt} /></span>
        </div>
      ))}
      <div className="flex items-center gap-3 border-l border-[#a0a0a0] py-1 pl-[3px]">
        <Mixed text="总成交" />
        <Mixed text="1" />
      </div>
    </footer>
  );
}

function Banner() {
  return (
    <a href="#home" className="absolute right-0 bottom-0 z-20 flex h-[81px] w-[800px] items-center overflow-hidden bg-[#80acda] whitespace-nowrap">
      <span className="ml-[17px] w-[276px] text-[55px] leading-none font-black text-[#1a0084]">公式指标网</span>
      <svg className="ml-7 h-[78px] w-[78px]" viewBox="0 0 78 78">
        <path d="M4.500 37A34.500 34.500 0 0 1 30 6M48 6A34.500 34.500 0 0 1 73.500 37" fill="none" stroke="#d65a46" strokeWidth="9" />
        <path d="M73.500 40A34.500 34.500 0 0 1 34 73" fill="none" stroke="#f0d24b" strokeWidth="10" />
        <path d="M32 0h14v15h8v22H23V15h9Z" fill="#f0d24b" />
        <path d="M24 40h30v16l2 8-12 4-4-18h-2l-4 18-11-5 2-7Z" fill="#f0d24b" />
        <path d="M23 26h9v6M43 24v13M24 46h9M45 46h10M24 54h9M45 54h10" fill="none" stroke="#80acda" strokeWidth="2" />
        <circle cx="39" cy="6" r="3.500" fill="#80acda" />
        <defs><path id="ring" d="M1 42A37 37 0 0 0 30 75" /></defs>
        <text className="fill-white font-['Liberation_Sans',sans-serif] text-[8px] font-bold"><textPath href="#ring">www.9m8.cn</textPath></text>
      </svg>
      <span className="ml-[30px] font-['DejaVu_Serif',serif] text-[51px] leading-none font-bold text-white [-webkit-text-stroke:2px_white]">www.9m8.cn</span>
    </a>
  );
}

export default function App() {
  return (
    <div className="relative flex min-h-screen flex-col overflow-hidden bg-black font-['Liberation_Sans','Noto_Sans_CJK_SC',sans-serif]">
      <Header />
      <div className="flex flex-1">
        <main className="min-w-0 flex-1">
          <Toolbar />
          <Charts />
          <IndicatorTabs />
          <MoneyFlow />
          <InfoTabs />
        </main>
        <Quote />
        <Rail />
      </div>
      <StatusBar />
      <Banner />
    </div>
  );
}
